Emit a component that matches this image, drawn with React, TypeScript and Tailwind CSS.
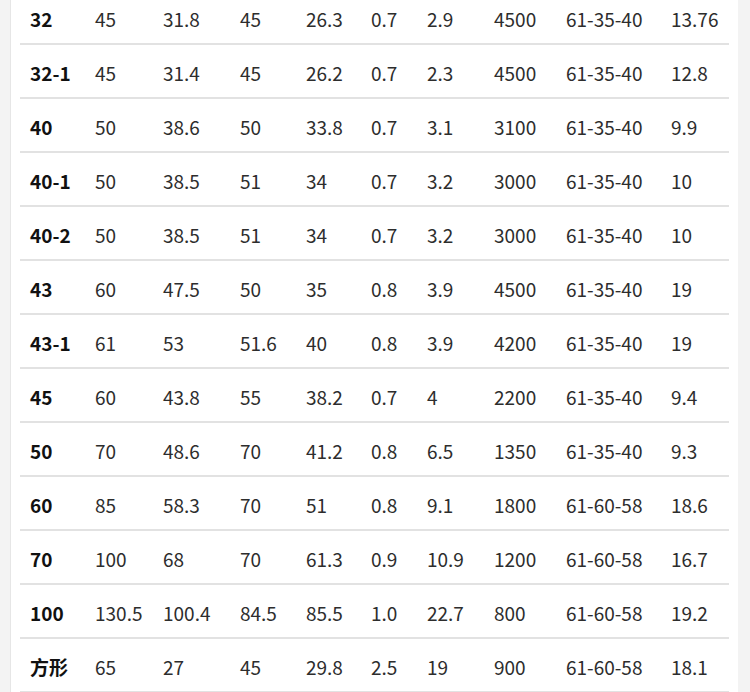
const rows: string[][] = [
  ["32", "45", "31.8", "45", "26.3", "0.7", "2.9", "4500", "61-35-40", "13.76"],
  ["32-1", "45", "31.4", "45", "26.2", "0.7", "2.3", "4500", "61-35-40", "12.8"],
  ["40", "50", "38.6", "50", "33.8", "0.7", "3.1", "3100", "61-35-40", "9.9"],
  ["40-1", "50", "38.5", "51", "34", "0.7", "3.2", "3000", "61-35-40", "10"],
  ["40-2", "50", "38.5", "51", "34", "0.7", "3.2", "3000", "61-35-40", "10"],
  ["43", "60", "47.5", "50", "35", "0.8", "3.9", "4500", "61-35-40", "19"],
  ["43-1", "61", "53", "51.6", "40", "0.8", "3.9", "4200", "61-35-40", "19"],
  ["45", "60", "43.8", "55", "38.2", "0.7", "4", "2200", "61-35-40", "9.4"],
  ["50", "70", "48.6", "70", "41.2", "0.8", "6.5", "1350", "61-35-40", "9.3"],
  ["60", "85", "58.3", "70", "51", "0.8", "9.1", "1800", "61-60-58", "18.6"],
  ["70", "100", "68", "70", "61.3", "0.9", "10.9", "1200", "61-60-58", "16.7"],
  ["100", "130.5", "100.4", "84.5", "85.5", "1.0", "22.7", "800", "61-60-58", "19.2"],
  ["方形", "65", "27", "45", "29.8", "2.5", "19", "900", "61-60-58", "18.1"],
];

export default function App() {
  return (
    <div className="h-[692px] w-[750px] overflow-hidden bg-[#f3f3f3] font-['Noto_Sans_CJK_SC',sans-serif]">
      <div className="ml-[10px] w-[728px] border-l border-[#e6e6e6] bg-white px-[9px]">
        {/* spec table, scrolled so the first row is cut at the top */}
        <div className="-mt-[9px]">
          {rows.map((row, i) => (
            <div
              key={i}
              className="grid h-[54px] grid-cols-[65px_68px_77px_66px_65px_56px_67px_72px_105px_63px] items-center border-b-2 border-[#e2e2e2] pt-[5px] text-[19px] text-[#2d2d2d]"
            >
              {row.map((cell, j) => (
                <div
                  key={j}
                  className={`pl-[10px] whitespace-nowrap ${j === 0 ? "font-bold text-[#111]" : ""}`}
                >
                  {cell}
                </div>
              ))}
            </div>
          ))}
        </div>
      </div>
    </div>
  );
}
